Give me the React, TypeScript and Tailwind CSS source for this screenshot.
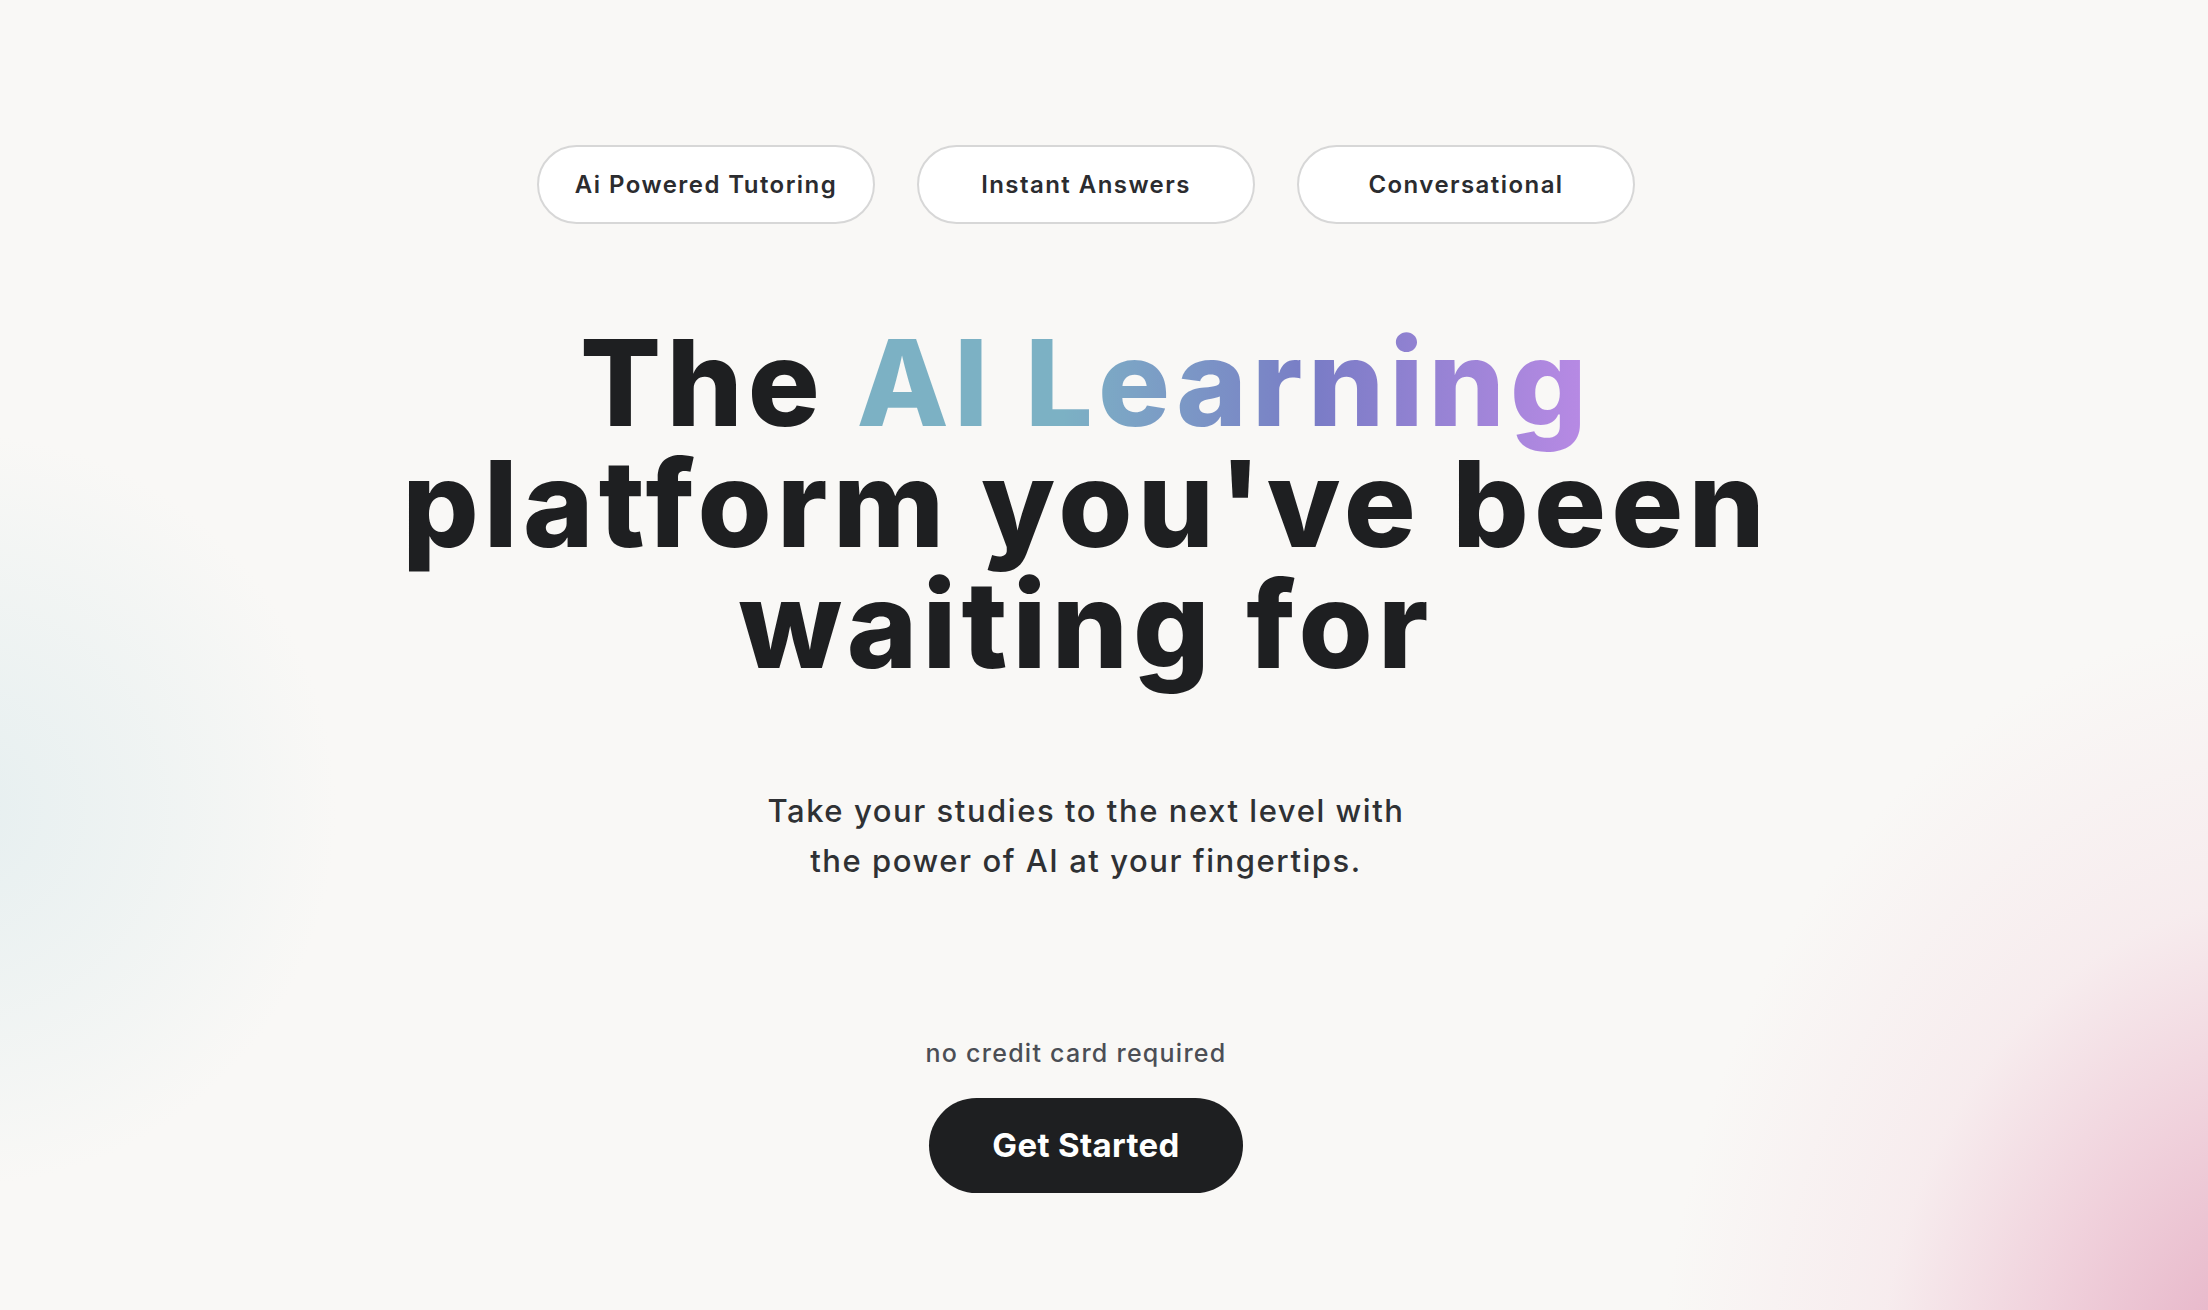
import React from 'react';

const pills = ['Ai Powered Tutoring', 'Instant Answers', 'Conversational'];

export default function App() {
  return (
    <div className="relative h-[1310px] w-full overflow-hidden bg-[#f9f8f6] font-['Inter',sans-serif]">
      {/* soft background glows */}
      <div className="pointer-events-none absolute -left-[420px] top-[430px] h-[760px] w-[760px] rounded-full bg-[radial-gradient(circle,#e6eff0_0%,rgba(232,240,240,0.6)_35%,rgba(249,248,246,0)_70%)]" />
      <div className="pointer-events-none absolute -bottom-[910px] -right-[692px] h-[1600px] w-[1240px] bg-[radial-gradient(ellipse_closest-side,#e2a9bf_0%,#e9bccd_20%,rgba(239,205,217,0.9)_40%,rgba(245,226,231,0.55)_65%,rgba(249,248,246,0)_100%)]" />

      <main className="relative flex flex-col items-center pr-[36px] pt-[145px]">
        <div className="flex gap-[42px]">
          {pills.map((p) => (
            <div
              key={p}
              className="flex h-[79px] w-[338px] items-center justify-center rounded-full border-2 border-[#d7d7d7] bg-white text-[24px] font-semibold tracking-[0.06em] text-[#2b2c2f]"
            >
              {p}
            </div>
          ))}
        </div>

        <h1 className="mt-[98px] text-center text-[120px] font-extrabold leading-[121px] tracking-[0.043em] text-[#1e1f21]">
          The{' '}
          <span className="bg-linear-to-r from-[#7cb1c4] from-[28%] via-[#797cc6] via-[62%] to-[#b98ae5] bg-clip-text text-transparent">
            AI Learning
          </span>
          <br />
          platform you've been
          <br />
          waiting for
        </h1>

        <p className="mt-[101px] text-center text-[31px] font-medium leading-[50px] tracking-[0.05em] text-[#2f3134]">
          Take your studies to the next level with
          <br />
          the power of AI at your fingertips.
        </p>

        <p className="mr-[20px] mt-[151px] text-[25px] font-medium leading-[32px] tracking-[0.05em] text-[#4b4e55]">
          no credit card required
        </p>

        <button className="mt-[29px] flex h-[95px] w-[314px] items-center justify-center rounded-full bg-[#1e1f21] text-[33px] font-bold tracking-[0.01em] text-white">
          Get Started
        </button>
      </main>
    </div>
  );
}
